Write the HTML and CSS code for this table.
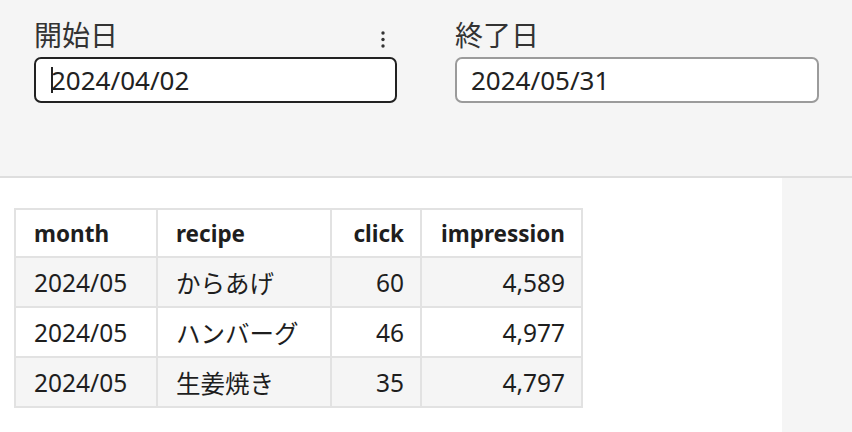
FILE: index.html
```html
<!DOCTYPE html>
<html lang="ja">
<head>
<meta charset="utf-8">
<link rel="stylesheet" href="styles.css">
</head>
<body>
<div class="filters">
  <div class="field">
    <div class="label-row">
      <span class="label">開始日</span>
      <svg class="kebab" width="6" height="18" viewBox="0 0 6 18"><circle cx="3" cy="3" r="1.7" fill="#333"/><circle cx="3" cy="9.5" r="1.7" fill="#333"/><circle cx="3" cy="16" r="1.7" fill="#333"/></svg>
    </div>
    <div class="input focused"><span class="caret"></span>2024/04/02</div>
  </div>
  <div class="field wide">
    <div class="label-row">
      <span class="label">終了日</span>
    </div>
    <div class="input">2024/05/31</div>
  </div>
</div>
<div class="content">
  <div class="main">
    <table class="grid">
      <colgroup>
        <col class="c-month"><col class="c-recipe"><col class="c-click"><col class="c-imp">
      </colgroup>
      <thead>
        <tr><th>month</th><th>recipe</th><th class="num">click</th><th class="num">impression</th></tr>
      </thead>
      <tbody>
        <tr class="shade"><td>2024/05</td><td>からあげ</td><td class="num">60</td><td class="num">4,589</td></tr>
        <tr><td>2024/05</td><td>ハンバーグ</td><td class="num">46</td><td class="num">4,977</td></tr>
        <tr class="shade"><td>2024/05</td><td>生姜焼き</td><td class="num">35</td><td class="num">4,797</td></tr>
      </tbody>
    </table>
  </div>
  <div class="side"></div>
</div>
</body>
</html>
```
FILE: styles.css
```css
html, body {
  margin: 0;
  padding: 0;
  height: 100%;
}
body {
  font-family: "Noto Sans", "Noto Sans CJK JP", sans-serif;
  color: #1e1e1e;
  background: #ffffff;
  display: flex;
  flex-direction: column;
}
.filters {
  background: #f5f5f5;
  height: 178px;
  flex: none;
  box-sizing: border-box;
  border-bottom: 2px solid #dedede;
  display: flex;
  gap: 58px;
  padding-left: 34px;
  padding-top: 16px;
}
.field {
  width: 363px;
  display: flex;
  flex-direction: column;
}
.field.wide {
  width: 364px;
}
.label-row {
  display: flex;
  justify-content: space-between;
  align-items: center;
  height: 38px;
  margin-bottom: 3px;
}
.label {
  font-size: 28px;
  line-height: 38px;
  color: #333;
}
.kebab {
  margin-right: 11px;
  margin-top: 8px;
}
.input {
  height: 46px;
  box-sizing: border-box;
  border: 2px solid #9b9b9b;
  border-radius: 7px;
  background: #fff;
  font-size: 26px;
  display: flex;
  align-items: center;
  padding-left: 14px;
  color: #222;
}
.input.focused {
  border-color: #222;
  padding-left: 15px;
}
.caret {
  display: inline-block;
  width: 0;
  height: 26px;
  border-left: 2px solid #222;
  margin-right: -2px;
}
.content {
  flex: 1;
  display: flex;
}
.main {
  flex: 1;
  padding: 30px 0 0 14px;
}
.side {
  width: 70px;
  background: #f5f5f5;
}
.grid {
  border-collapse: collapse;
  table-layout: fixed;
  font-size: 24.5px;
  color: #1e1e1e;
}
.c-month { width: 142px; }
.c-recipe { width: 174px; }
.c-click { width: 90px; }
.c-imp { width: 161px; }
.grid th, .grid td {
  border: 2px solid #e2e2e2;
  padding: 0 16px 0 18px;
  height: 48px;
  text-align: left;
  white-space: nowrap;
}
.grid th {
  font-weight: 700;
  font-size: 22.5px;
  height: 46px;
  background: #fff;
}
.grid td.num, .grid th.num {
  text-align: right;
}
.grid tr.shade td {
  background: #f5f5f5;
}
```
